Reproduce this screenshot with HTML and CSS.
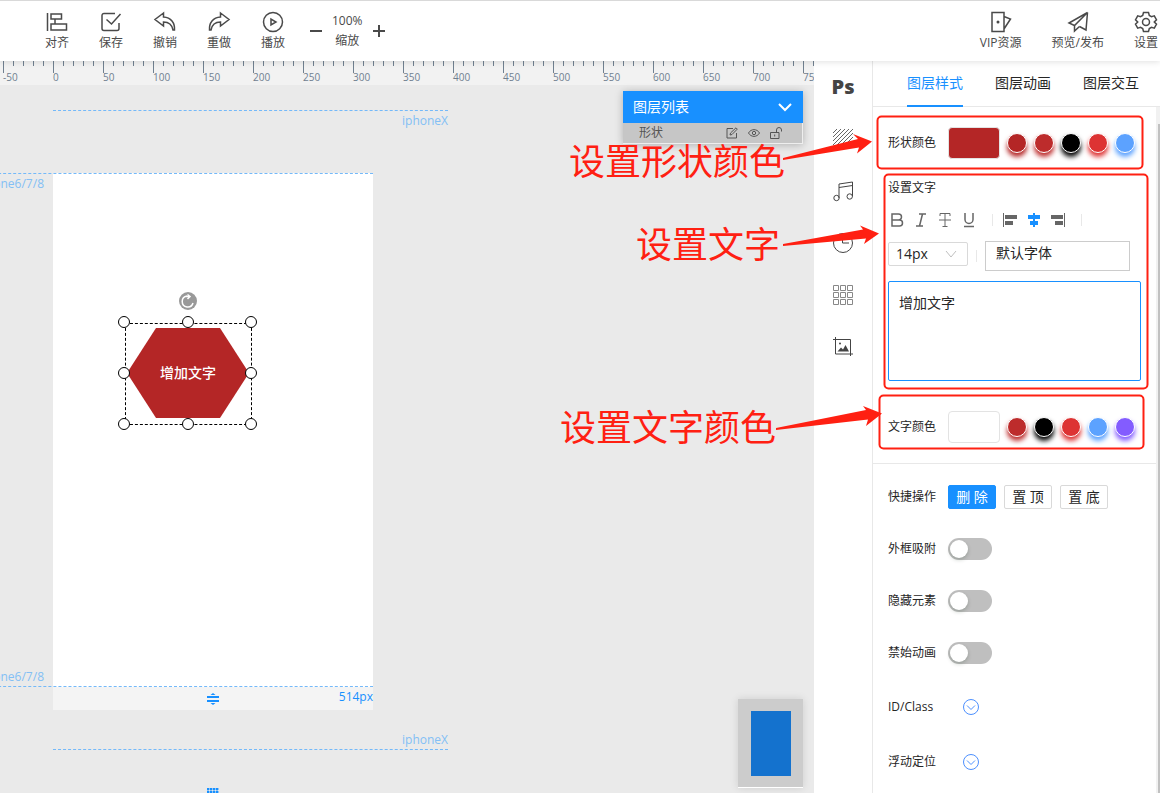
FILE: index.html
```html
<!DOCTYPE html>
<html lang="zh-CN">
<head>
<meta charset="utf-8">
<title>图层编辑器</title>
<link rel="stylesheet" href="styles.css">
</head>
<body>
<header class="topbar">
  <nav class="actions">
    <button class="action"><svg class="icon" viewBox="0 0 22 22"><path d="M1.500 2v18M5 3h10.500v5H5zM5 13h15.500v6H5zM9 8v5"/></svg><span>对齐</span></button>
    <button class="action"><svg class="icon" viewBox="0 0 22 22"><path d="M15 2.500H4a2 2 0 0 0-2 2v13a2 2 0 0 0 2 2h13a2 2 0 0 0 2-2V12M6.500 8.500l5 4.500L20.500 3"/></svg><span>保存</span></button>
    <button class="action"><svg class="icon" viewBox="0 0 22 22"><path d="M9.500 2L1 8.500 9.500 15v-4c5 0 8.500 2.500 9.500 8h1.500C21 12 17 6.500 9.500 6z"/></svg><span>撤销</span></button>
    <button class="action"><svg class="icon" viewBox="0 0 22 22"><path d="M12.500 2L21 8.500 12.500 15v-4c-5 0-8.500 2.500-9.500 8H1.500C1 12 5 6.500 12.500 6z"/></svg><span>重做</span></button>
    <button class="action"><svg class="icon" viewBox="0 0 22 22"><circle cx="11" cy="11" r="9.500"/><path d="M9 8v6l5-3z"/></svg><span>播放</span></button>
  </nav>
  <div class="zoom">
    <button class="step" aria-label="缩小"><svg viewBox="0 0 12 12"><path d="M0 6h12"/></svg></button>
    <div class="zoom-text"><span>100%</span><span>缩放</span></div>
    <button class="step" aria-label="放大"><svg viewBox="0 0 12 12"><path d="M0 6h12M6 0v12"/></svg></button>
  </div>
  <nav class="links">
    <button class="action fit"><svg class="icon" viewBox="0 0 22 22"><path d="M2 1.500h12v19H2zM14 5.500l6.500 2.500L14 18"/><circle class="solid" cx="8" cy="11" r="1.500"/></svg><span>VIP资源</span></button>
    <button class="action fit"><svg class="icon" viewBox="0 0 22 22"><path d="M20.500 1.500L2 12l5.500 2.500zM20.500 1.500L19 19l-6.500-3.500M20.500 1.500L7.500 14.500V20l5-4.500"/></svg><span>预览/发布</span></button>
    <button class="action fit"><svg class="icon" viewBox="0 0 22 22"><path d="M8.500 1.500h5l.8 3 2.200 1.200 2.800-.8 2.200 4-2.200 2.100 2.200 2.100-2.200 4-2.800-.8-2.200 1.200-.8 3h-5l-.8-3-2.200-1.200-2.800.8-2.200-4L2.700 11 .5 8.900l2.200-4 2.800.8 2.200-1.200z"/><circle cx="11" cy="11" r="3.500"/></svg><span>设置</span></button>
  </nav>
</header>

<main class="editor">
  <section class="workspace">
    <div class="ruler">
      <span>-50</span><span>0</span><span>50</span><span>100</span><span>150</span><span>200</span><span>250</span><span>300</span><span>350</span><span>400</span><span>450</span><span>500</span><span>550</span><span>600</span><span>650</span><span>700</span><span>750</span>
    </div>
    <div class="stage">
      <div class="paper"></div>
      <div class="paper-foot">
        <svg class="resize" viewBox="0 0 12 12"><path d="M0 3h12v2H0zM0 7h12v2H0zM3.500 2L6 0l2.500 2zM3.500 10L6 12l2.500-2z"/></svg>
        <span>514px</span>
      </div>
      <div class="guide guide-x top">iphoneX</div>
      <div class="guide guide-8 top">iphone6/7/8</div>
      <div class="guide guide-8 bottom">iphone6/7/8</div>
      <div class="guide guide-x bottom">iphoneX</div>
      <div class="grip"></div>
      <div class="selection">
        <svg class="hexagon" viewBox="0 0 122 90" preserveAspectRatio="none"><path d="M29 0h64l29 45-29 45H29L0 45z"/></svg>
        <span class="shape-text">增加文字</span>
        <i class="handle nw"></i><i class="handle n"></i><i class="handle ne"></i><i class="handle w"></i><i class="handle e"></i><i class="handle sw"></i><i class="handle s"></i><i class="handle se"></i>
        <svg class="rotate" viewBox="0 0 18 18"><circle cx="9" cy="9" r="9"/><path d="M8 4a5.500 5.500 0 1 0 6 7M7 4.500h3.500M8.500 2.500l2.500 2-2.500 2.500"/></svg>
      </div>
    </div>
    <aside class="layers">
      <button class="layers-head"><span>图层列表</span><svg viewBox="0 0 14 8"><path d="M1 1l6 6 6-6"/></svg></button>
      <div class="layer">
        <span>形状</span>
        <svg viewBox="0 0 12 12"><path d="M7 1.500H1v9.500h9.500V6M4 8l.5-2L10 .8l1.300 1.300L6 7.500z"/></svg>
        <svg viewBox="0 0 12 12"><path d="M.5 6C3 1.500 9 1.500 11.500 6 9 10.500 3 10.500.5 6z"/><circle cx="6" cy="6" r="1.700"/></svg>
        <svg viewBox="0 0 12 12"><path d="M.5 5.500h8.500v6H.5zM6.500 5.500V3a2.500 2.500 0 0 1 5 0v1.500M4.700 7.500v2"/></svg>
      </div>
    </aside>
    <div class="minimap"><div class="minimap-page"></div></div>
  </section>

  <nav class="tools">
    <button class="tool ps">Ps</button>
    <button class="tool hatch" aria-label="背景"><svg viewBox="0 0 20 20"><path d="M0 4l4-4M0 8l8-8M0 12L12 0M0 16L16 0M0 20L20 0M4 20L20 4M8 20L20 8M12 20l8-8M16 20l4-4"/></svg></button>
    <button class="tool" aria-label="音乐"><svg viewBox="0 0 20 20"><path d="M6 17V3l13.500-2v14.500M6 6.500l13.500-2"/><circle cx="3.500" cy="17" r="2.700"/><circle cx="16.700" cy="15.500" r="2.700"/></svg></button>
    <button class="tool" aria-label="历史"><svg viewBox="0 0 20 20"><circle cx="10" cy="10" r="9.500"/><path d="M9.500 4.500V10h6.500"/></svg></button>
    <button class="tool pale" aria-label="组件"><svg viewBox="0 0 20 20"><path d="M.5.500h5v5h-5zM7.500.500h5v5h-5zM14.500.500h5v5h-5zM.5 7.500h5v5h-5zM7.500 7.500h5v5h-5zM14.500 7.500h5v5h-5zM.5 14.500h5v5h-5zM7.500 14.500h5v5h-5zM14.500 14.500h5v5h-5z"/></svg></button>
    <button class="tool" aria-label="图片"><svg viewBox="0 0 20 20"><path d="M2.500 0v17H20M0 2.500h17.500V19"/><path class="solid" d="M4.500 14.500l3.500-4 2 2 2.500-4.500 3.500 6.500z"/><circle class="solid" cx="7" cy="6.500" r="1"/></svg></button>
  </nav>

  <section class="panel">
    <nav class="tabs">
      <button class="tab active">图层样式</button><button class="tab">图层动画</button><button class="tab">图层交互</button>
    </nav>
    <div class="panel-scroll">
      <div class="panel-body">
        <div class="row colors">
          <span class="label">形状颜色</span>
          <button class="swatch brick" aria-label="形状当前颜色"></button>
          <div class="dots"><button class="dot brick"></button><button class="dot crimson"></button><button class="dot black"></button><button class="dot red"></button><button class="dot blue"></button></div>
        </div>
        <label class="label title" for="content">设置文字</label>
        <div class="format">
          <button aria-label="加粗"><svg viewBox="0 0 14 14"><path d="M2 1h6.500a3 3 0 0 1 0 6H2zM2 7h7.500a3 3 0 0 1 0 6H2z"/></svg></button>
          <button aria-label="斜体"><svg viewBox="0 0 14 14"><path d="M5 1h7M2 13h7M8.500 1l-3 12"/></svg></button>
          <button aria-label="删除线"><svg class="thin" viewBox="0 0 14 14"><path d="M2 3V.5h10V3M7 .5v13M4.500 13.500h5M1 7h12"/></svg></button>
          <button aria-label="下划线"><svg viewBox="0 0 14 14"><path d="M3 0v6.500a4 4 0 0 0 8 0V0M2 13.500h10"/></svg></button>
          <i class="split"></i>
          <button aria-label="左对齐"><svg class="fill" viewBox="0 0 14 14"><path d="M0 0h1v14H0zM2 2h12v4H2zM2 8h8v4H2z"/></svg></button>
          <button class="on" aria-label="居中"><svg class="fill" viewBox="0 0 14 14"><path d="M6 0h2v14H6zM1 2h12v4H1zM3 8h8v4H3z"/></svg></button>
          <button aria-label="右对齐"><svg class="fill" viewBox="0 0 14 14"><path d="M13 0h1v14h-1zM0 2h12v4H0zM4 8h8v4H4z"/></svg></button>
          <i class="split"></i>
        </div>
        <div class="font-row">
          <div class="select-wrap">
            <select class="size" aria-label="字号"><option>14px</option></select>
            <svg viewBox="0 0 10 8"><path d="M0 1l5 6 5-6"/></svg>
          </div>
          <i class="split"></i>
          <input class="family" type="text" value="默认字体" aria-label="字体">
        </div>
        <textarea class="content" id="content">增加文字</textarea>
        <div class="row colors">
          <span class="label">文字颜色</span>
          <button class="swatch white" aria-label="文字当前颜色"></button>
          <div class="dots"><button class="dot crimson"></button><button class="dot black"></button><button class="dot red"></button><button class="dot blue"></button><button class="dot violet"></button></div>
        </div>
        <div class="options">
          <div class="row"><span class="label">快捷操作</span><div class="buttons"><button class="btn primary">删 除</button><button class="btn">置 顶</button><button class="btn">置 底</button></div></div>
          <div class="row"><label class="label" for="snap">外框吸附</label><input class="switch" type="checkbox" id="snap"></div>
          <div class="row"><label class="label" for="hide">隐藏元素</label><input class="switch" type="checkbox" id="hide"></div>
          <div class="row"><label class="label" for="noanim">禁始动画</label><input class="switch" type="checkbox" id="noanim"></div>
          <div class="row tall"><span class="label">ID/Class</span><button class="expand" aria-label="展开 ID/Class"><svg viewBox="0 0 16 16"><circle cx="8" cy="8" r="7.500"/><path d="M4 6.500l4 4 4-4"/></svg></button></div>
          <div class="row tall"><span class="label">浮动定位</span><button class="expand" aria-label="展开浮动定位"><svg viewBox="0 0 16 16"><circle cx="8" cy="8" r="7.500"/><path d="M4 6.500l4 4 4-4"/></svg></button></div>
        </div>
      </div>
      <div class="track"><div class="thumb"></div></div>
    </div>
  </section>
</main>

<div class="notes">
  <svg class="marks" viewBox="0 0 620 400">
    <path d="M243 158L318 139 313 134l19 7.500-15 12 2-6L243 160z"/>
    <path d="M243 244l80-14.500-3-4 19 8-15 10.500 2-5.500L243 246z"/>
    <path d="M236 428l90-18-3-4 19 7.500L326 426l2-6.500L236 430z"/>
    <rect x="337.500" y="116.500" width="265" height="52" rx="4"/>
    <rect x="344.500" y="174.500" width="263" height="214" rx="4"/>
    <rect x="339.500" y="395.500" width="264" height="53" rx="4"/>
  </svg>
  <span class="note shape-note">设置形状颜色</span>
  <span class="note text-note">设置文字</span>
  <span class="note color-note">设置文字颜色</span>
</div>
</body>
</html>
```

FILE: styles.css
```css
* { box-sizing: border-box; }
body {
  margin: 0;
  height: 100vh;
  display: flex;
  flex-direction: column;
  position: relative;
  overflow: hidden;
  background: #fff;
  color: #262626;
  font: 12px/18px "Open Sans", "Noto Sans CJK SC", sans-serif;
}
button, input, select, textarea {
  font: inherit;
  color: inherit;
  margin: 0;
  padding: 0;
  border: 0;
  background: none;
}
svg { display: block; fill: none; stroke: currentColor; overflow: visible; }
.solid { fill: currentColor; stroke: none; }

/* Top bar */
.topbar {
  flex: none;
  height: 61px;
  display: flex;
  align-items: flex-start;
  padding: 10px 2px 0 30px;
  border-top: 1px solid #d9d9d9;
  background: #fff;
  color: #4a4a4a;
  box-shadow: 0 1px 6px rgba(0, 0, 0, .12);
  position: relative;
  z-index: 2;
}
.actions { display: flex; }
.action {
  width: 54px;
  display: flex;
  flex-direction: column;
  align-items: center;
  gap: 1px;
  white-space: nowrap;
}
.action.fit { width: auto; }
.icon { width: 22px; height: 22px; stroke-width: 1.5; }
.zoom { display: flex; align-items: center; gap: 10px; padding-left: 10px; }
.step svg { width: 12px; height: 12px; stroke-width: 2; }
.zoom-text { display: flex; flex-direction: column; align-items: center; line-height: 20px; }
.links { display: flex; gap: 30px; margin-left: auto; }

/* Workspace */
.editor { flex: 1; min-height: 0; display: flex; }
.workspace { flex: 1; min-width: 0; position: relative; overflow: hidden; background: #eaeaea; }
.ruler {
  height: 24px;
  display: flex;
  padding: 8px 0 0 3px;
  overflow: hidden;
  font-size: 10px;
  line-height: 16px;
  color: #708090;
  background:
    repeating-linear-gradient(90deg, #708090 0 1px, transparent 1px 50px) 3px 0 / 100% 12px no-repeat,
    repeating-linear-gradient(90deg, #708090 0 1px, transparent 1px 10px) 3px 0 / 100% 5px no-repeat,
    #f2f2f2;
}
.ruler span { flex: none; width: 50px; }
.stage { position: absolute; left: 53px; top: 0; width: 320px; height: 100%; }
.paper { position: absolute; top: 112px; width: 320px; height: 514px; background: #fff; }
.paper-foot {
  position: absolute;
  top: 626px;
  width: 320px;
  height: 23px;
  display: flex;
  align-items: center;
  justify-content: flex-end;
  background: #f4f4f4;
  color: #1890ff;
  line-height: 20px;
}
.paper-foot span { align-self: flex-start; }
.resize { width: 12px; height: 12px; margin-right: 120px; fill: #1890ff; stroke: none; }
.guide { position: absolute; color: #83bff5; height: 20px; line-height: 20px; text-align: right; }
.guide.top { border-top: 1px dashed #74b9f9; }
.guide.bottom { border-bottom: 1px dashed #74b9f9; }
.guide-x { left: 0; width: 395px; }
.guide-x.top { top: 49px; }
.guide-x.bottom { top: 669px; }
.guide-8 { right: 0; width: 400px; padding-right: 329px; }
.guide-8.top { top: 112px; }
.guide-8.bottom { top: 606px; }
.grip {
  position: absolute;
  left: 154px;
  bottom: 0;
  width: 12px;
  height: 5px;
  background: radial-gradient(circle at 1px 1px, #1890ff 1px, transparent 2px) 0 0 / 3px 3px;
}
.selection {
  position: absolute;
  left: 72px;
  top: 262px;
  width: 127px;
  height: 102px;
  padding: 4px 2px 6px 1px;
  display: grid;
  place-items: center;
  border: 1px dashed #000;
}
.hexagon { grid-area: 1 / 1; width: 100%; height: 100%; fill: #b42626; stroke: none; }
.shape-text { grid-area: 1 / 1; color: #fff; font-size: 14px; font-weight: 500; z-index: 1; }
.handle {
  position: absolute;
  width: 12px;
  height: 12px;
  margin: -7px;
  border: 1px solid #000;
  border-radius: 50%;
  background: #fff;
  z-index: 1;
}
.nw, .n, .ne { top: -1px; }
.w, .e { top: 50%; }
.sw, .s, .se { top: 101%; }
.nw, .w, .sw { left: -1px; }
.n, .s { left: 50%; }
.ne, .e, .se { left: 101%; }
.rotate { position: absolute; left: 53px; top: -32px; width: 18px; height: 18px; fill: #999; stroke: none; }
.rotate path { fill: none; stroke: #fff; stroke-width: 1.5; }

.layers {
  position: absolute;
  right: 11px;
  top: 30px;
  width: 180px;
  box-shadow: 0 1px 8px rgba(0, 0, 0, .25);
}
.layers-head {
  width: 100%;
  height: 32px;
  display: flex;
  align-items: center;
  justify-content: space-between;
  padding: 0 11px 0 10px;
  background: #1890ff;
  color: #fff;
  font-size: 14px;
}
.layers-head svg { width: 14px; height: 8px; stroke-width: 2; }
.layer {
  height: 21px;
  display: flex;
  align-items: center;
  gap: 10px;
  padding: 0 20px 0 16px;
  background: #c6c6c6;
  color: #555;
  border-right: 1px solid #eee;
  border-bottom: 1px solid #eee;
}
.layer span { flex: 1; }
.layer svg { width: 12px; height: 12px; }
.minimap {
  position: absolute;
  right: 11px;
  bottom: 5px;
  width: 65px;
  padding: 12px 12px 11px 13px;
  background: #ccc;
  border-bottom: 1px solid #fff;
  box-shadow: 0 0 8px rgba(0, 0, 0, .12);
}
.minimap-page { height: 65px; background: #1472ce; }

/* Tool strip */
.tools { flex: none; width: 58px; display: flex; flex-direction: column; background: #fff; color: #444; }
.tool { height: 52px; display: grid; place-items: center; }
.tool svg { width: 20px; height: 20px; }
.ps { font-size: 20px; font-weight: 800; }
.hatch { color: #666; }
.pale { color: #888; }

/* Style panel */
.panel { flex: none; width: 288px; display: flex; flex-direction: column; border-left: 1px solid #e8e8e8; background: #fff; }
.tabs { flex: none; height: 46px; display: flex; gap: 32px; padding-left: 34px; border-bottom: 1px solid #e8e8e8; }
.tab { height: 46px; font-size: 14px; border-bottom: 2px solid transparent; }
.tab.active { color: #1890ff; border-color: #1890ff; }
.panel-scroll { flex: 1; min-height: 0; display: flex; }
.panel-body { flex: 1; overflow: hidden; }
.track { width: 4px; padding: 17px 0 0 2px; background: #f1f1f1; }
.thumb { height: 100%; background: #c1c1c1; }
.row { height: 52px; display: flex; align-items: center; padding-left: 15px; }
.row.tall { height: 55px; }
.colors { height: 72px; }
.label { width: 60px; }
.title { display: block; margin-left: 15px; }
.swatch { width: 52px; height: 32px; border: 1px solid #e3e3e3; border-radius: 4px; }
.dots { display: flex; gap: 7px; padding-left: 7px; }
.dot { width: 20px; height: 20px; border-radius: 50%; border: 1px solid #fff; box-shadow: 0 4px 5px var(--c); }
.swatch, .dot { background: var(--c); }
.brick { --c: #b42626; }
.crimson { --c: #bd2c2c; }
.black { --c: #000; }
.red { --c: #dd3333; }
.blue { --c: #5ca2ff; }
.violet { --c: #835cff; }
.white { --c: #fff; }
.format { height: 24px; margin: 11px 15px 0; display: flex; align-items: center; gap: 6px; color: #666; }
.format button { width: 18px; height: 18px; display: grid; place-items: center; }
.format svg { width: 14px; height: 14px; stroke-width: 1.5; }
.format .thin { stroke-width: 1; }
.format .fill { fill: currentColor; stroke: none; }
.format .on { color: #1890ff; }
.split { width: 1px; height: 12px; background: #e8e8e8; }
.format .split { margin: 0 2px 0 8px; }
.font-row { height: 30px; margin: 9px 26px 0 15px; display: flex; align-items: center; gap: 8px; font-size: 14px; }
.select-wrap { position: relative; margin-bottom: 4px; }
.size { appearance: none; display: block; width: 80px; height: 24px; padding-left: 7px; border: 1px solid #d9d9d9; border-radius: 2px; }
.select-wrap svg { position: absolute; right: 12px; top: 8px; width: 10px; height: 8px; color: #bfbfbf; pointer-events: none; }
.family { flex: 1; min-width: 0; height: 30px; padding: 0 10px 8px; border: 1px solid #ccc; }
.content {
  display: block;
  width: 253px;
  height: 100px;
  margin: 10px 0 10px 15px;
  padding: 10px;
  border: 1px solid #1890ff;
  border-radius: 2px;
  font-size: 14px;
  line-height: 22px;
  resize: none;
}
.options { border-top: 1px solid #e8e8e8; padding-top: 7px; }
.buttons { display: flex; gap: 8px; }
.btn { width: 48px; height: 24px; border: 1px solid #d9d9d9; border-radius: 2px; font-size: 14px; line-height: 20px; }
.primary { background: #1890ff; border-color: #1890ff; color: #fff; }
.switch {
  appearance: none;
  width: 44px;
  height: 22px;
  padding: 2px;
  border-radius: 11px;
  background: #bfbfbf;
}
.switch::before {
  content: "";
  display: block;
  width: 18px;
  height: 18px;
  border-radius: 50%;
  background: #fff;
  box-shadow: 0 2px 4px rgba(0, 35, 11, .2);
}
.switch:checked { background: #1890ff; }
.switch:checked::before { margin-left: auto; }
.expand { margin-left: 15px; color: #4d90fe; }
.expand svg { width: 16px; height: 16px; }

/* Callouts drawn over the editor */
.notes { position: absolute; right: 0; top: 0; width: 620px; height: 100%; pointer-events: none; z-index: 3; }
.marks { position: absolute; width: 620px; height: 400px; fill: #ff2012; stroke: none; }
.marks rect { fill: none; stroke: #ff2012; stroke-width: 2; }
.note { position: absolute; font-size: 36px; line-height: 40px; color: #ff2012; white-space: nowrap; }
.shape-note { right: 375px; top: 142px; }
.text-note { right: 380px; top: 225px; }
.color-note { right: 384px; top: 408px; }
```
